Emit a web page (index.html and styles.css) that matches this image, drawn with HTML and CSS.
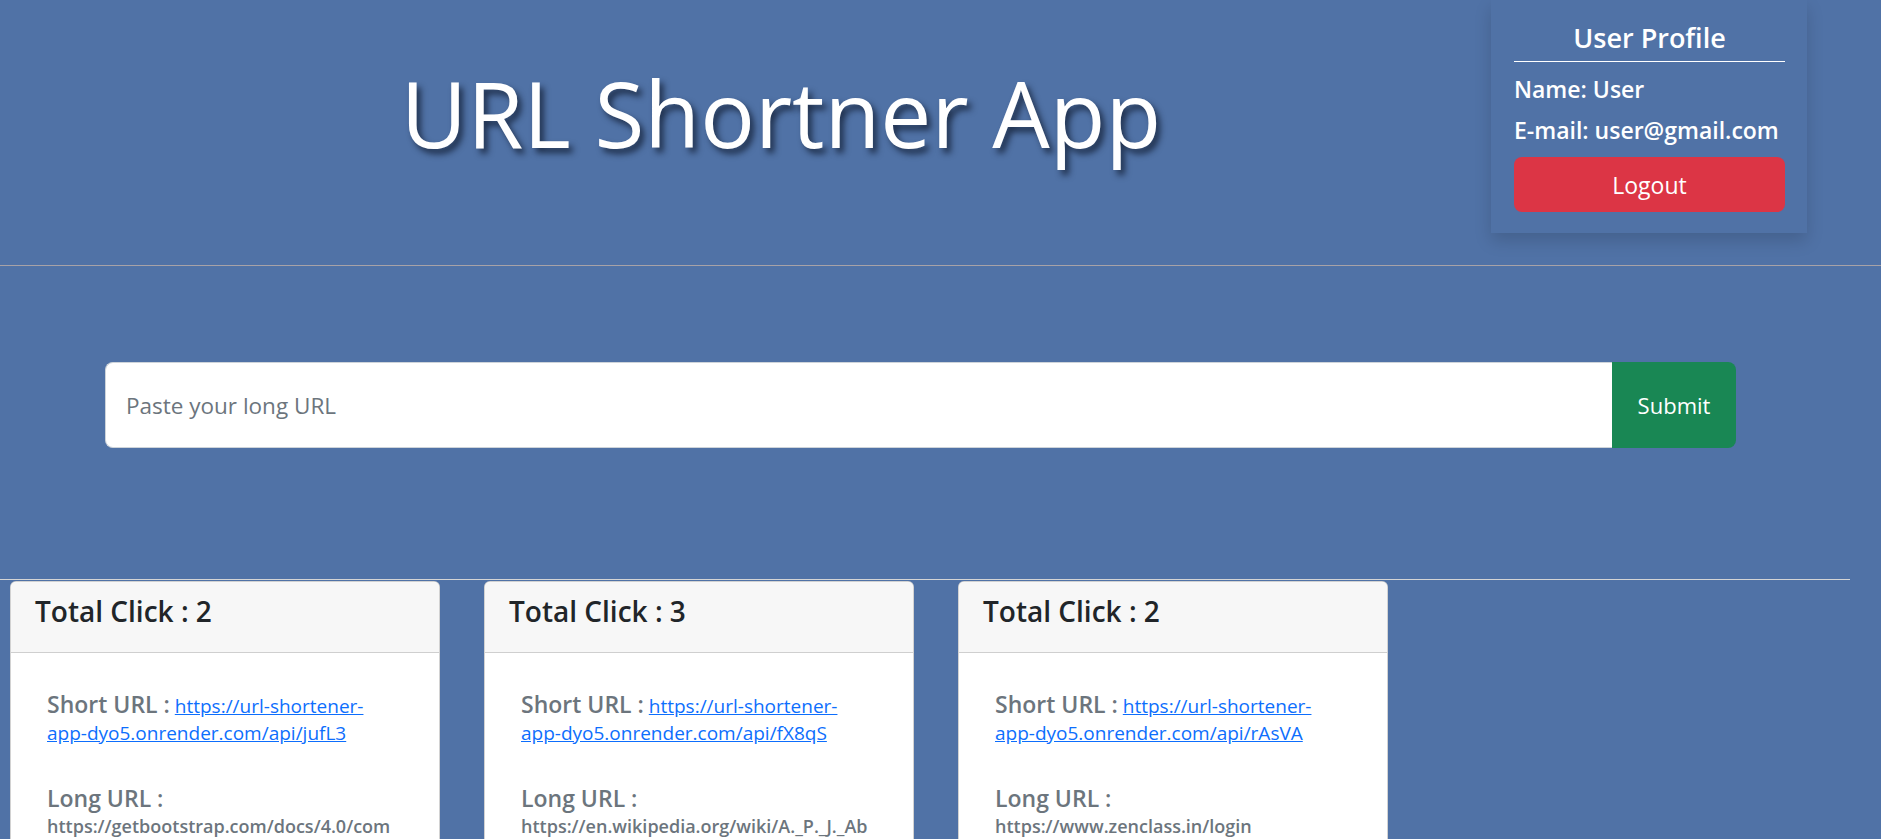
FILE: index.html
```html
<!DOCTYPE html>
<html lang="en">
<head>
<meta charset="utf-8">
<title>URL Shortner App</title>
<link rel="stylesheet" href="styles.css">
</head>
<body>
<header class="top">
  <div class="title-wrap">
    <h1 class="title">URL Shortner App</h1>
  </div>
  <aside class="profile">
    <h3 class="profile-title">User Profile</h3>
    <p class="profile-line">Name: User</p>
    <p class="profile-line">E-mail: user@gmail.com</p>
    <button class="btn-logout" type="button">Logout</button>
  </aside>
</header>
<hr class="rule rule-top">
<section class="search">
  <form class="search-form">
    <input class="search-input" type="text" placeholder="Paste your long URL">
    <button class="btn-submit" type="button">Submit</button>
  </form>
</section>
<hr class="rule rule-bottom">
<section class="cards">
  <article class="card">
    <div class="card-header"><h2 class="card-title">Total Click : 2</h2></div>
    <div class="card-body">
      <p class="short"><span class="label">Short URL :</span> <a class="link" href="#">https://url-shortener-app-dyo5.onrender.com/api/jufL3</a></p>
      <h4 class="label long-label">Long URL :</h4>
      <p class="long-url">https://getbootstrap.com/docs/4.0/components/card/</p>
    </div>
  </article>
  <article class="card">
    <div class="card-header"><h2 class="card-title">Total Click : 3</h2></div>
    <div class="card-body">
      <p class="short"><span class="label">Short URL :</span> <a class="link" href="#">https://url-shortener-app-dyo5.onrender.com/api/fX8qS</a></p>
      <h4 class="label long-label">Long URL :</h4>
      <p class="long-url">https://en.wikipedia.org/wiki/A._P._J._Abdul_Kalam</p>
    </div>
  </article>
  <article class="card">
    <div class="card-header"><h2 class="card-title">Total Click : 2</h2></div>
    <div class="card-body">
      <p class="short"><span class="label">Short URL :</span> <a class="link" href="#">https://url-shortener-app-dyo5.onrender.com/api/rAsVA</a></p>
      <h4 class="label long-label">Long URL :</h4>
      <p class="long-url">https://www.zenclass.in/login</p>
    </div>
  </article>
</section>
</body>
</html>
```
FILE: styles.css
```css
html {
  scrollbar-width: none;
}
html::-webkit-scrollbar { display: none; }

body {
  margin: 0;
  background: #5072a6;
  font-family: "Open Sans", "Noto Sans", sans-serif;
  color: #fff;
}

.top {
  display: flex;
  align-items: flex-start;
  height: 265px;
}

.title-wrap {
  flex: 1;
  padding-left: 71px;
  padding-top: 59px;
  text-align: center;
}

.title {
  margin: 0;
  font-size: 91px;
  font-weight: 400;
  line-height: 1.2;
  color: #fff;
  text-shadow: 4px 5px 6px rgba(15, 25, 45, 0.75);
}

.profile {
  width: 271px;
  margin-right: 74px;
  padding: 22px 22px 21px 23px;
  box-shadow: 0 8px 16px rgba(0, 0, 0, 0.15);
}

.profile-title {
  margin: 0 0 7px;
  padding-bottom: 7px;
  border-bottom: 1px solid #fff;
  font-size: 27px;
  font-weight: 600;
  line-height: 1.2;
  text-align: center;
}

.profile-line {
  margin: 0;
  font-size: 23px;
  font-weight: 600;
  line-height: 41px;
  white-space: nowrap;
}

.btn-logout {
  display: block;
  width: 100%;
  height: 55px;
  margin-top: 6px;
  border: 0;
  border-radius: 8px;
  background: #dc3545;
  color: #fff;
  font-family: inherit;
  font-size: 23px;
}

.rule {
  margin: 0;
  border: 0;
  height: 1px;
}
.rule-top { background: #a7a2a7; }
.rule-bottom { background: #d5d5d5; margin-right: 31px; }

.search {
  padding: 96px 145px 131px 105px;
}

.search-form {
  display: flex;
  height: 86px;
}

.search-input {
  flex: 1;
  box-sizing: border-box;
  height: 86px;
  padding: 0 20px;
  border: 1px solid #ced4da;
  border-right: 0;
  border-radius: 8px 0 0 8px;
  font-family: inherit;
  font-size: 22.5px;
  color: #212529;
  outline: none;
}
.search-input::placeholder { color: #6c757d; }

.btn-submit {
  width: 124px;
  border: 0;
  border-radius: 0 8px 8px 0;
  background: #198754;
  color: #fff;
  font-family: inherit;
  font-size: 22px;
}

.cards {
  display: flex;
  gap: 44px;
  padding: 1px 0 0 10px;
}

.card {
  box-sizing: border-box;
  width: 430px;
  background: #fff;
  border: 1px solid rgba(0, 0, 0, 0.175);
  border-radius: 6px;
  overflow: hidden;
  color: #212529;
}

.card-header {
  height: 71px;
  box-sizing: border-box;
  padding: 13px 24px 0;
  background: #f7f7f7;
  border-bottom: 1px solid #cfcfcf;
}

.card-title {
  margin: 0;
  font-size: 28px;
  font-weight: 600;
  line-height: 1.2;
}

.card-body {
  padding: 38px 38px 40px 36px;
  overflow-wrap: break-word;
}

.label {
  font-size: 23px;
  font-weight: 600;
  color: #6c757d;
}

.short {
  margin: 0;
  font-size: 19px;
  line-height: 27px;
}

.link {
  color: #0d6efd;
  font-weight: 500;
  text-decoration: underline;
}

.long-label {
  margin: 38px 0 0;
  line-height: 1.2;
}

.long-url {
  margin: 0;
  font-size: 18px;
  font-weight: 600;
  line-height: 27px;
  color: #6c757d;
}
```
